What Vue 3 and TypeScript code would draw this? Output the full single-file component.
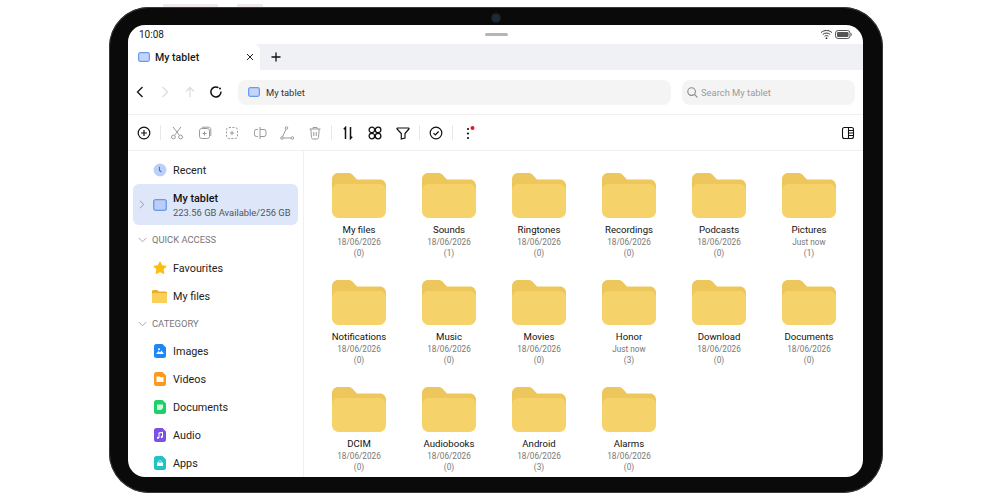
<template>
  <div class="page">
    <div class="tablet">
      <span class="side-btn side-btn--long"></span>
      <span class="side-btn side-btn--short"></span>
      <span class="camera"></span>
      <div class="screen">
        <div class="status">
          <span class="time">10:08</span>
          <span class="handle"></span>
          <span class="status-icons">
            <svg width="13" height="11" viewBox="0 0 13 11" fill="none" stroke="#333" stroke-width="1">
              <path d="M1 3.6C4.2.8 8.8.8 12 3.6" />
              <path d="M2.8 5.4C5 3.6 8 3.6 10.2 5.4" />
              <path d="M4.6 7.2C5.7 6.4 7.3 6.4 8.4 7.2" />
              <circle cx="6.5" cy="9.2" r="0.9" fill="#333" stroke="none" />
            </svg>
            <svg width="17" height="9" viewBox="0 0 17 9">
              <rect x="0.5" y="0.5" width="14.5" height="8" rx="2.6" fill="none" stroke="#555" />
              <rect x="2" y="2" width="11.5" height="5" rx="1.2" fill="#555" />
              <path d="M15.8 3v3c.7-.3 1-.8 1-1.5s-.3-1.200-1-1.500z" fill="#555" />
            </svg>
          </span>
        </div>

        <div class="tabs">
          <div class="tab">
            <svg class="device" width="12" height="10" viewBox="0 0 12 10">
              <rect x="0.6" y="0.6" width="10.800" height="8.800" rx="1.800" fill="#c3d5f8" stroke="#6c9af0" stroke-width="1.200" />
            </svg>
            <span class="tab-name">My tablet</span>
            <svg class="tab-x" width="8" height="8" viewBox="0 0 8 8" stroke="#222" stroke-width="1">
              <path d="M1 1l6 6M7 1l-6 6" />
            </svg>
          </div>
          <svg class="tab-add" width="10" height="10" viewBox="0 0 10 10" stroke="#111" stroke-width="1.300">
            <path d="M5 .5v9M.5 5h9" />
          </svg>
        </div>

        <div class="nav">
          <div class="nav-btns">
            <svg width="10" height="12" viewBox="0 0 10 12" fill="none" stroke="#111" stroke-width="1.300"><path d="M7.500 1L2.500 6l5 5" /></svg>
            <svg width="10" height="12" viewBox="0 0 10 12" fill="none" stroke="#ddd" stroke-width="1.300"><path d="M2.500 1l5 5-5 5" /></svg>
            <svg width="10" height="12" viewBox="0 0 10 12" fill="none" stroke="#ddd" stroke-width="1.300"><path d="M5 11V1.500M1 5.500l4-4 4 4" /></svg>
            <svg width="12" height="12" viewBox="0 0 12 12" fill="none" stroke="#111" stroke-width="1.500"><path d="M10.900 5.600A5 5 0 1 1 8.400 1.600" /><circle cx="10" cy="2.600" r="1" fill="#111" stroke="none" /></svg>
          </div>
          <div class="address">
            <svg width="12" height="10" viewBox="0 0 12 10">
              <rect x="0.6" y="0.6" width="10.800" height="8.800" rx="1.800" fill="#c3d5f8" stroke="#6c9af0" stroke-width="1.200" />
            </svg>
            <span>My tablet</span>
          </div>
          <div class="search">
            <svg width="11" height="11" viewBox="0 0 11 11" fill="none" stroke="#888" stroke-width="1.100"><circle cx="4.600" cy="4.600" r="3.800" /><path d="M7.400 7.400l3 3" /></svg>
            <span>Search My tablet</span>
          </div>
        </div>

        <div class="actions">
          <svg class="act" width="14" height="14" viewBox="0 0 14 14" fill="none" stroke="#111" stroke-width="1.200"><circle cx="7" cy="7" r="5.800" /><path d="M7 4v6M4 7h6" /></svg>
          <i class="sep"></i>
          <svg class="act" width="14" height="14" viewBox="0 0 14 14" fill="none" stroke="#9a9a9a" stroke-width="1"><path d="M3 1l6.200 8M11 1L4.800 9" /><circle cx="3.400" cy="11" r="1.900" /><circle cx="10.600" cy="11" r="1.900" /></svg>
          <svg class="act" width="14" height="14" viewBox="0 0 14 14" fill="none" stroke="#9a9a9a" stroke-width="1"><rect x="1.500" y="2.500" width="10" height="10" rx="2.200" /><path d="M4 1.200h6.500c1.500 0 2.300.8 2.300 2.300V10" /><path d="M6.500 5.500v4M4.500 7.500h4" /></svg>
          <svg class="act" width="14" height="14" viewBox="0 0 14 14" fill="none" stroke="#9a9a9a" stroke-width="1"><rect x="1.500" y="1.500" width="11" height="11" rx="2.400" stroke-dasharray="2 1.500" /><path d="M7 4.800v4.400M4.800 7h4.400" /></svg>
          <svg class="act" width="14" height="14" viewBox="0 0 14 14" fill="none" stroke="#9a9a9a" stroke-width="1"><path d="M7 1v12" /><path d="M5 3.500H3.500a2 2 0 0 0-2 2v3a2 2 0 0 0 2 2H5" /><path d="M7 3.500h4a2 2 0 0 1 2 2v3a2 2 0 0 1-2 2H7" /></svg>
          <svg class="act" width="14" height="14" viewBox="0 0 14 14" fill="none" stroke="#9a9a9a" stroke-width="1"><circle cx="6.500" cy="2" r="1.300" /><circle cx="2" cy="12" r="1.300" /><circle cx="12.500" cy="12" r="1.300" /><path d="M6 3.200L2.500 10.800M3.300 12h7.900" /></svg>
          <svg class="act" width="14" height="14" viewBox="0 0 14 14" fill="none" stroke="#9a9a9a" stroke-width="1"><path d="M1.500 3h11M5 3V1.500h4V3M2.800 3l.7 8.500c.1.900.7 1.500 1.600 1.500h3.800c.9 0 1.500-.6 1.600-1.500L11.200 3M5.800 6v4M8.200 6v4" /></svg>
          <i class="sep"></i>
          <svg class="act" width="14" height="14" viewBox="0 0 14 14" fill="none" stroke="#111" stroke-width="1.500"><path d="M4.500 13V1.500L2.800 3.200M9.500 1v11.500l1.700-1.700" /></svg>
          <svg class="act" width="14" height="14" viewBox="0 0 14 14" fill="none" stroke="#111" stroke-width="1.300"><circle cx="3.900" cy="3.900" r="2.800" /><circle cx="10.100" cy="3.900" r="2.800" /><circle cx="3.900" cy="10.100" r="2.800" /><circle cx="10.100" cy="10.100" r="2.800" /></svg>
          <svg class="act" width="14" height="14" viewBox="0 0 14 14" fill="none" stroke="#111" stroke-width="1.200"><path d="M1.500 2h11a.6.6 0 0 1 .4 1L9 7.500V12L5.300 13V7.500L1.100 3a.6.6 0 0 1 .4-1z" /></svg>
          <i class="sep"></i>
          <svg class="act" width="14" height="14" viewBox="0 0 14 14" fill="none" stroke="#111" stroke-width="1.200"><circle cx="7" cy="7" r="5.800" /><path d="M4.500 7.200l1.800 1.800 3.300-3.500" /></svg>
          <i class="sep"></i>
          <svg class="act" width="14" height="14" viewBox="0 0 14 14"><circle cx="6" cy="3" r="1.100" fill="#111" /><circle cx="6" cy="7.500" r="1.100" fill="#111" /><circle cx="6" cy="12" r="1.100" fill="#111" /><circle cx="10.500" cy="2" r="2" fill="#ee1122" /></svg>
          <svg class="act panel-toggle" width="14" height="14" viewBox="0 0 14 14" fill="none" stroke="#111" stroke-width="1.100"><rect x="1.500" y="1.500" width="11" height="11" rx="2" /><path d="M7.500 1.500v11M7.500 4.500h5M7.500 7h5M7.500 9.500h5" /></svg>
        </div>

        <div class="body">
          <aside class="sidebar">
            <div class="row">
              <svg class="row-icon" width="14" height="14" viewBox="0 0 14 14"><circle cx="7" cy="7" r="6.500" fill="#bcd0f7" /><path d="M6.500 3.800v3.700l2 1.600" fill="none" stroke="#3b6fd6" stroke-width="1.100" /></svg>
              <span>Recent</span>
            </div>
            <div class="device-row">
              <svg class="caret" width="6" height="9" viewBox="0 0 6 9" fill="none" stroke="#999" stroke-width="1"><path d="M1 .8l3.800 3.700L1 8.200" /></svg>
              <svg width="14" height="12" viewBox="0 0 14 12"><rect x="0.700" y="0.700" width="12.600" height="10.600" rx="2" fill="#b9cdf6" stroke="#6b98ee" stroke-width="1.300" /></svg>
              <div class="device-text">
                <span class="device-title">My tablet</span>
                <span class="device-sub">223.56 GB Available/256 GB</span>
              </div>
            </div>

            <div class="section section--quick">
              <svg width="9" height="6" viewBox="0 0 9 6" fill="none" stroke="#aaa" stroke-width="1"><path d="M.8 1l3.700 3.800L8.200 1" /></svg>
              <span>QUICK ACCESS</span>
            </div>
            <div class="row">
              <svg class="row-icon" width="14" height="14" viewBox="0 0 14 14"><path d="M7 .8l1.900 3.900 4.300.6-3.100 3 .7 4.300L7 10.600l-3.800 2 .7-4.300-3.100-3 4.300-.6z" fill="#fbbd10" stroke="#fbbd10" stroke-linejoin="round" /></svg>
              <span>Favourites</span>
            </div>
            <div class="row">
              <svg class="row-icon row-icon--wide" width="15" height="13" viewBox="0 0 15 13"><path d="M1.500 0h3.600l1.600 1.500h6.800c.8 0 1.500.7 1.500 1.500v8.500c0 .8-.7 1.500-1.500 1.500h-12C.7 13 0 12.300 0 11.500v-10C0 .7.700 0 1.500 0z" fill="#f2ac24" /><rect x="0" y="3" width="15" height="10" rx="1.500" fill="#fccf58" /></svg>
              <span>My files</span>
            </div>

            <div class="section">
              <svg width="9" height="6" viewBox="0 0 9 6" fill="none" stroke="#aaa" stroke-width="1"><path d="M.8 1l3.700 3.800L8.200 1" /></svg>
              <span>CATEGORY</span>
            </div>
            <div v-for="cat in categories" :key="cat.name" class="row">
              <svg class="cat-icon" width="12" height="14" viewBox="0 0 12 14">
                <path d="M2.500 0h6L12 3.500v8A2.500 2.500 0 0 1 9.500 14h-7A2.500 2.500 0 0 1 0 11.500v-9A2.500 2.500 0 0 1 2.500 0z" :fill="cat.color" />
                <g transform="translate(2 3.500)" fill="#fff" v-html="cat.glyph"></g>
              </svg>
              <span>{{ cat.name }}</span>
            </div>
          </aside>

          <main class="files">
            <div v-for="folder in folders" :key="folder.name" class="folder">
              <svg width="54" height="45" viewBox="0 0 54 45">
                <path d="M6 0h10.500c1.600 0 3 .6 4.100 1.700L25 6.500h23c3.300 0 6 2.700 6 6V30H0V6c0-3.300 2.700-6 6-6z" fill="#eec75c" />
                <rect x="0" y="11" width="54" height="34" rx="6.500" fill="#f6d36a" />
              </svg>
              <span class="folder-name">{{ folder.name }}</span>
              <span class="folder-meta folder-meta--date">{{ folder.date }}</span>
              <span class="folder-meta">({{ folder.count }})</span>
            </div>
          </main>
        </div>
      </div>
    </div>
  </div>
</template>

<script setup lang="ts">
interface Folder {
  name: string
  date: string
  count: number
}

const d = '18/06/2026'

const folders: Folder[] = [
  { name: 'My files', date: d, count: 0 },
  { name: 'Sounds', date: d, count: 1 },
  { name: 'Ringtones', date: d, count: 0 },
  { name: 'Recordings', date: d, count: 0 },
  { name: 'Podcasts', date: d, count: 0 },
  { name: 'Pictures', date: 'Just now', count: 1 },
  { name: 'Notifications', date: d, count: 0 },
  { name: 'Music', date: d, count: 0 },
  { name: 'Movies', date: d, count: 0 },
  { name: 'Honor', date: 'Just now', count: 3 },
  { name: 'Download', date: d, count: 0 },
  { name: 'Documents', date: d, count: 0 },
  { name: 'DCIM', date: d, count: 0 },
  { name: 'Audiobooks', date: d, count: 0 },
  { name: 'Android', date: d, count: 3 },
  { name: 'Alarms', date: d, count: 0 },
]

const categories = [
  { name: 'Images', color: '#1e86f5', glyph: '<circle cx="3" cy="1.800" r="1"/><path d="M0 6.500l2.500-3 1.500 1.500L5.500 3 8 6.500z"/>' },
  { name: 'Videos', color: '#fb9a1c', glyph: '<path d="M.5 1h3l.8.8h3.200v4.700H.5z"/>' },
  { name: 'Documents', color: '#1fcf6a', glyph: '<path d="M1 1h6v3.500L5 6.500H1z" opacity=".8"/>' },
  { name: 'Audio', color: '#7c4fe6', glyph: '<path d="M2.500 1L7 .2v5H6V1.500L3.500 2v4.500h-1z"/><circle cx="2" cy="6.300" r="1.100"/><circle cx="5.800" cy="5.400" r="1.100"/>' },
  { name: 'Apps', color: '#22c3c6', glyph: '<path d="M1 3h6v3.500H1z"/><path d="M2.500 3V2a1.500 1.500 0 0 1 3 0v1H5V2a1 1 0 0 0-2 0v1z"/>' },
]
</script>

<style>
html,
body {
  margin: 0;
  background: #fff;
}
</style>

<style scoped>
.page {
  width: 1000px;
  height: 500px;
  box-sizing: border-box;
  padding: 7px 117px 7px 109px;
  overflow: hidden;
  background: #fff;
  font-family: Roboto, "Noto Sans", sans-serif;
  color: #1a1a1a;
}

.tablet {
  position: relative;
  box-sizing: border-box;
  height: 486px;
  padding: 18px 20px 16px 19px;
  border-radius: 40px;
  background: #0a0a0a;
  box-shadow: inset 0 0 0 1px #3a3a3a;
}

.side-btn {
  position: absolute;
  top: -3px;
  height: 3px;
  border-radius: 1px 1px 0 0;
  background: #f0eaea;
}

.side-btn--long {
  left: 54px;
  width: 55px;
}

.side-btn--short {
  left: 128px;
  width: 26px;
}

.camera {
  position: absolute;
  top: 7px;
  left: 383px;
  width: 8px;
  height: 8px;
  border-radius: 50%;
  background: #1d2a38;
  box-shadow: 0 0 0 1px #1a1c20;
}

.screen {
  display: flex;
  flex-direction: column;
  height: 452px;
  overflow: hidden;
  border-radius: 17px;
  background: #fff;
}

.status {
  position: relative;
  display: flex;
  flex: none;
  align-items: center;
  justify-content: space-between;
  height: 19px;
  padding: 0 11px 0 11px;
}

.time {
  font-size: 10px;
  color: #222;
}

.handle {
  position: absolute;
  top: 8px;
  left: 357px;
  width: 23px;
  height: 2.500px;
  border-radius: 2px;
  background: #b5b5b5;
}

.status-icons {
  display: flex;
  align-items: center;
  gap: 2px;
}

.tabs {
  display: flex;
  flex: none;
  align-items: center;
  height: 26px;
  margin-left: 4px;
  background: #f0f1f5;
}

.tab {
  display: flex;
  align-items: center;
  box-sizing: border-box;
  width: 128px;
  height: 100%;
  padding: 0 6px 0 6px;
  border-radius: 0 7px 0 0;
  background: #fff;
}

.tab-name {
  flex: 1;
  margin-left: 5px;
  font-size: 10.600px;
  font-weight: 500;
}

.tab-add {
  margin-left: 11px;
}

.nav {
  display: flex;
  flex: none;
  align-items: center;
  height: 44px;
  padding: 0 8px 0 7px;
  border-bottom: 1px solid #f0f0f0;
}

.nav-btns {
  display: flex;
  align-items: center;
  gap: 15px;
  width: 103px;
}

.address,
.search {
  display: flex;
  align-items: center;
  box-sizing: border-box;
  height: 25px;
  border-radius: 8px;
  background: #f4f4f4;
  font-size: 9.400px;
}

.address {
  flex: 1;
  gap: 6px;
  padding-left: 10px;
  color: #333;
}

.search {
  width: 173px;
  margin-left: 11px;
  gap: 3px;
  padding-left: 5px;
  color: #9a9a9a;
}

.actions {
  display: flex;
  flex: none;
  align-items: center;
  height: 35px;
  padding: 0 7px 0 9px;
  border-bottom: 1px solid #f0f0f0;
}

.act {
  flex: none;
  margin-right: 13.500px;
}

.sep {
  flex: none;
  width: 1px;
  height: 15px;
  margin: 0 9px 0 -4.500px;
  background: #e8e8e8;
}

.panel-toggle {
  margin-left: auto;
  margin-right: 1px;
}

.body {
  display: flex;
  flex: 1;
  min-height: 0;
}

.sidebar {
  flex: none;
  box-sizing: border-box;
  width: 176px;
  padding-top: 5px;
  border-right: 1px solid #f0f0f0;
}

.row {
  display: flex;
  align-items: center;
  height: 28px;
  padding-left: 25px;
  font-size: 10.800px;
  color: #222;
}

.row-icon {
  flex: none;
  margin-right: 6px;
}

.row-icon--wide {
  margin-left: -1px;
  margin-right: 6px;
}

.device-row {
  display: flex;
  align-items: center;
  box-sizing: border-box;
  height: 41px;
  margin: 0 5px 0 5px;
  padding-left: 6px;
  border-radius: 6px;
  background: #dde7f9;
}

.caret {
  margin-right: 8px;
}

.device-text {
  display: flex;
  flex-direction: column;
  gap: 2px;
  margin-left: 6px;
}

.device-title {
  font-size: 10.800px;
  font-weight: 500;
  color: #111;
}

.device-sub {
  font-size: 9.400px;
  color: #555;
}

.section {
  display: flex;
  align-items: center;
  gap: 5px;
  height: 27px;
  padding-left: 10px;
  font-size: 9.400px;
  color: #777;
}

.section--quick {
  height: 29px;
}

.cat-icon {
  flex: none;
  margin-left: 1px;
  margin-right: 7px;
}

.files {
  display: grid;
  flex: 1;
  grid-template-columns: repeat(6, 90px);
  grid-auto-rows: 107px;
  padding: 22px 0 0 10px;
}

.folder {
  display: flex;
  flex-direction: column;
  align-items: center;
}

.folder-name {
  margin-top: 6px;
  font-size: 9.600px;
  line-height: 12px;
  color: #111;
}

.folder-meta {
  font-size: 8.200px;
  line-height: 11px;
  color: #777;
}

.folder-meta--date {
  margin-top: 1px;
}
</style>
